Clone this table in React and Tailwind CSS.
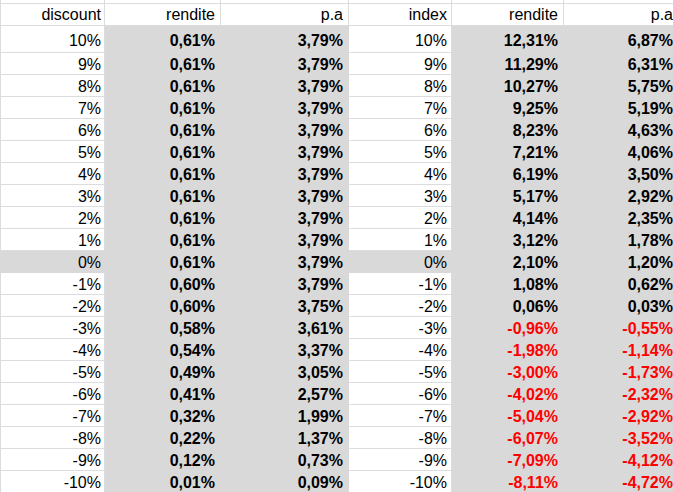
const rows = [
  ['10%', '0,61%', '3,79%', '12,31%', '6,87%'],
  ['9%', '0,61%', '3,79%', '11,29%', '6,31%'],
  ['8%', '0,61%', '3,79%', '10,27%', '5,75%'],
  ['7%', '0,61%', '3,79%', '9,25%', '5,19%'],
  ['6%', '0,61%', '3,79%', '8,23%', '4,63%'],
  ['5%', '0,61%', '3,79%', '7,21%', '4,06%'],
  ['4%', '0,61%', '3,79%', '6,19%', '3,50%'],
  ['3%', '0,61%', '3,79%', '5,17%', '2,92%'],
  ['2%', '0,61%', '3,79%', '4,14%', '2,35%'],
  ['1%', '0,61%', '3,79%', '3,12%', '1,78%'],
  ['0%', '0,61%', '3,79%', '2,10%', '1,20%'],
  ['-1%', '0,60%', '3,79%', '1,08%', '0,62%'],
  ['-2%', '0,60%', '3,75%', '0,06%', '0,03%'],
  ['-3%', '0,58%', '3,61%', '-0,96%', '-0,55%'],
  ['-4%', '0,54%', '3,37%', '-1,98%', '-1,14%'],
  ['-5%', '0,49%', '3,05%', '-3,00%', '-1,73%'],
  ['-6%', '0,41%', '2,57%', '-4,02%', '-2,32%'],
  ['-7%', '0,32%', '1,99%', '-5,04%', '-2,92%'],
  ['-8%', '0,22%', '1,37%', '-6,07%', '-3,52%'],
  ['-9%', '0,12%', '0,73%', '-7,09%', '-4,12%'],
  ['-10%', '0,01%', '0,09%', '-8,11%', '-4,72%'],
];

// widths include the right grid line
const cols = [
  'w-[105px] border-l pr-[3px]',
  'w-[116px] pr-[5px]',
  'w-[128px] pr-[5px]',
  'w-[103px] pr-[4px]',
  'w-[112px] pr-[5px]',
  'w-[114px] pr-[4px]',
];

function Cell({ col, gray, bold, red, children }) {
  const tone = gray ? 'bg-[#d9d9d9] border-[#d9d9d9]' : 'bg-white border-[#dadcdd]';
  const text = red ? 'text-[#ff0000]' : 'text-black';
  return (
    <div className={`shrink-0 h-full flex items-end justify-end border-r border-b ${cols[col]} ${tone} ${text} ${bold ? 'font-bold' : ''}`}>
      {children}
    </div>
  );
}

export default function App() {
  return (
    <div className="w-[673px] h-[492px] overflow-hidden bg-white font-['Liberation_Sans',Arial,sans-serif] text-[16px] leading-[18px]">
      <div className="w-[678px]">
        <div className="flex h-[4px]">
          {cols.map((_, i) => (
            <Cell key={i} col={i} />
          ))}
        </div>
        <div className="flex h-[22px] [&>div]:pb-[1px]">
          <Cell col={0}>discount</Cell>
          <Cell col={1}>rendite</Cell>
          <Cell col={2}>p.a</Cell>
          <Cell col={3}>index</Cell>
          <Cell col={4}>rendite</Cell>
          <Cell col={5}>p.a</Cell>
        </div>
        {rows.map((r, i) => {
          const zero = r[0] === '0%';
          const red = r[3].startsWith('-');
          return (
            <div key={r[0]} className={`flex ${i === 0 ? 'h-[27px] [&>div]:pb-[2px]' : 'h-[22px]'}`}>
              <Cell col={0} gray={zero}>{r[0]}</Cell>
              <Cell col={1} gray bold>{r[1]}</Cell>
              <Cell col={2} gray bold>{r[2]}</Cell>
              <Cell col={3} gray={zero}>{r[0]}</Cell>
              <Cell col={4} gray bold red={red}>{r[3]}</Cell>
              <Cell col={5} gray bold red={red}>{r[4]}</Cell>
            </div>
          );
        })}
      </div>
    </div>
  );
}
